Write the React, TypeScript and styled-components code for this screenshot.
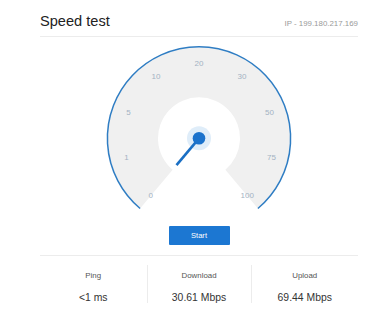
import React from "react";
import styled, { createGlobalStyle } from "styled-components";

const GlobalStyle = createGlobalStyle`
  html, body { margin: 0; padding: 0; background: #fff; }
  body { font-family: "Liberation Sans", Arial, Helvetica, sans-serif; }
`;

const Page = styled.div`
  width: 318px;
  margin-left: 40px;
`;

const Header = styled.div`
  display: flex;
  justify-content: space-between;
  align-items: baseline;
  height: 37px;
  box-sizing: border-box;
  padding-top: 12px;
  border-bottom: 1px solid #ececec;
`;

const Title = styled.h1`
  margin: 0;
  font-size: 14.6px;
  font-weight: 400;
  color: #222;
  line-height: 18px;
`;

const Ip = styled.span`
  font-size: 7.9px;
  color: #9a9a9a;
`;

const GaugeWrap = styled.div`
  display: flex;
  justify-content: center;
  height: 182px;
`;

const Controls = styled.div`
  display: flex;
  justify-content: center;
  padding: 7px 0 10px;
  border-bottom: 1px solid #ececec;
`;

const StartButton = styled.button`
  width: 61px;
  height: 19px;
  border: none;
  border-radius: 1px;
  background: #1c77d2;
  color: #fff;
  font-family: inherit;
  font-size: 7.6px;
  font-weight: 500;
  padding: 0;
  cursor: pointer;
`;

const Stats = styled.div`
  display: grid;
  grid-template-columns: 106.5px 104px 1fr;
  padding-top: 9px;
`;

const Stat = styled.div<{ $divider?: boolean }>`
  display: flex;
  flex-direction: column;
  align-items: center;
  padding-top: 6px;
  height: 38px;
  box-sizing: border-box;
  border-left: ${(p) => (p.$divider ? "1px solid #ececec" : "none")};
`;

const StatLabel = styled.span`
  font-size: 7.9px;
  color: #555;
  line-height: 10px;
`;

const StatValue = styled.span`
  margin-top: 10.5px;
  font-size: 10.4px;
  color: #333;
  line-height: 12px;
`;

const CX = 100;
const CY = 101.3;

const polar = (r: number, deg: number) => {
  const a = (deg * Math.PI) / 180;
  return [CX + r * Math.sin(a), CY - r * Math.cos(a)];
};

const sectorPath = (rIn: number, rOut: number, a0: number, a1: number) => {
  const [x0, y0] = polar(rOut, a0);
  const [x1, y1] = polar(rOut, a1);
  const [x2, y2] = polar(rIn, a1);
  const [x3, y3] = polar(rIn, a0);
  return `M${x0} ${y0} A${rOut} ${rOut} 0 1 1 ${x1} ${y1} L${x2} ${y2} A${rIn} ${rIn} 0 1 0 ${x3} ${y3} Z`;
};

const arcPath = (r: number, a0: number, a1: number) => {
  const [x0, y0] = polar(r, a0);
  const [x1, y1] = polar(r, a1);
  return `M${x0} ${y0} A${r} ${r} 0 1 1 ${x1} ${y1}`;
};

const labels = ["0", "1", "5", "10", "20", "30", "50", "75", "100"];

const Gauge: React.FC<{ value: number }> = ({ value }) => {
  const needleAngle = -140 + value;
  const [nx, ny] = polar(35, needleAngle);
  return (
    <svg width="200" height="182" viewBox="0 0 200 182">
      <path d={sectorPath(41, 91, -140, 140)} fill="#f0f0f0" />
      <path d={arcPath(91.6, -140, 140)} fill="none" stroke="#2f7dc3" strokeWidth="1.5" />
      {labels.map((l, i) => {
        const [x, y] = polar(75, -140 + i * 35);
        return (
          <text
            key={l}
            x={x}
            y={y}
            textAnchor="middle"
            dominantBaseline="central"
            fontSize="8"
            fill="#a3b2c3"
            fontFamily="Liberation Sans, Arial, sans-serif"
          >
            {l}
          </text>
        );
      })}
      <circle cx={CX} cy={CY} r="12" fill="#dfedf9" />
      <line x1={CX} y1={CY} x2={nx} y2={ny} stroke="#1a6fc4" strokeWidth="2.6" strokeLinecap="butt" />
      <circle cx={CX} cy={CY} r="6.3" fill="#1a72cc" />
    </svg>
  );
};

const stats = [
  { label: "Ping", value: "<1 ms" },
  { label: "Download", value: "30.61 Mbps" },
  { label: "Upload", value: "69.44 Mbps" },
];

export default function App() {
  return (
    <>
      <GlobalStyle />
      <Page>
        <Header>
          <Title>Speed test</Title>
          <Ip>IP - 199.180.217.169</Ip>
        </Header>
        <GaugeWrap>
          <Gauge value={0} />
        </GaugeWrap>
        <Controls>
          <StartButton>Start</StartButton>
        </Controls>
        <Stats>
          {stats.map((s, i) => (
            <Stat key={s.label} $divider={i > 0}>
              <StatLabel>{s.label}</StatLabel>
              <StatValue>{s.value}</StatValue>
            </Stat>
          ))}
        </Stats>
      </Page>
    </>
  );
}
